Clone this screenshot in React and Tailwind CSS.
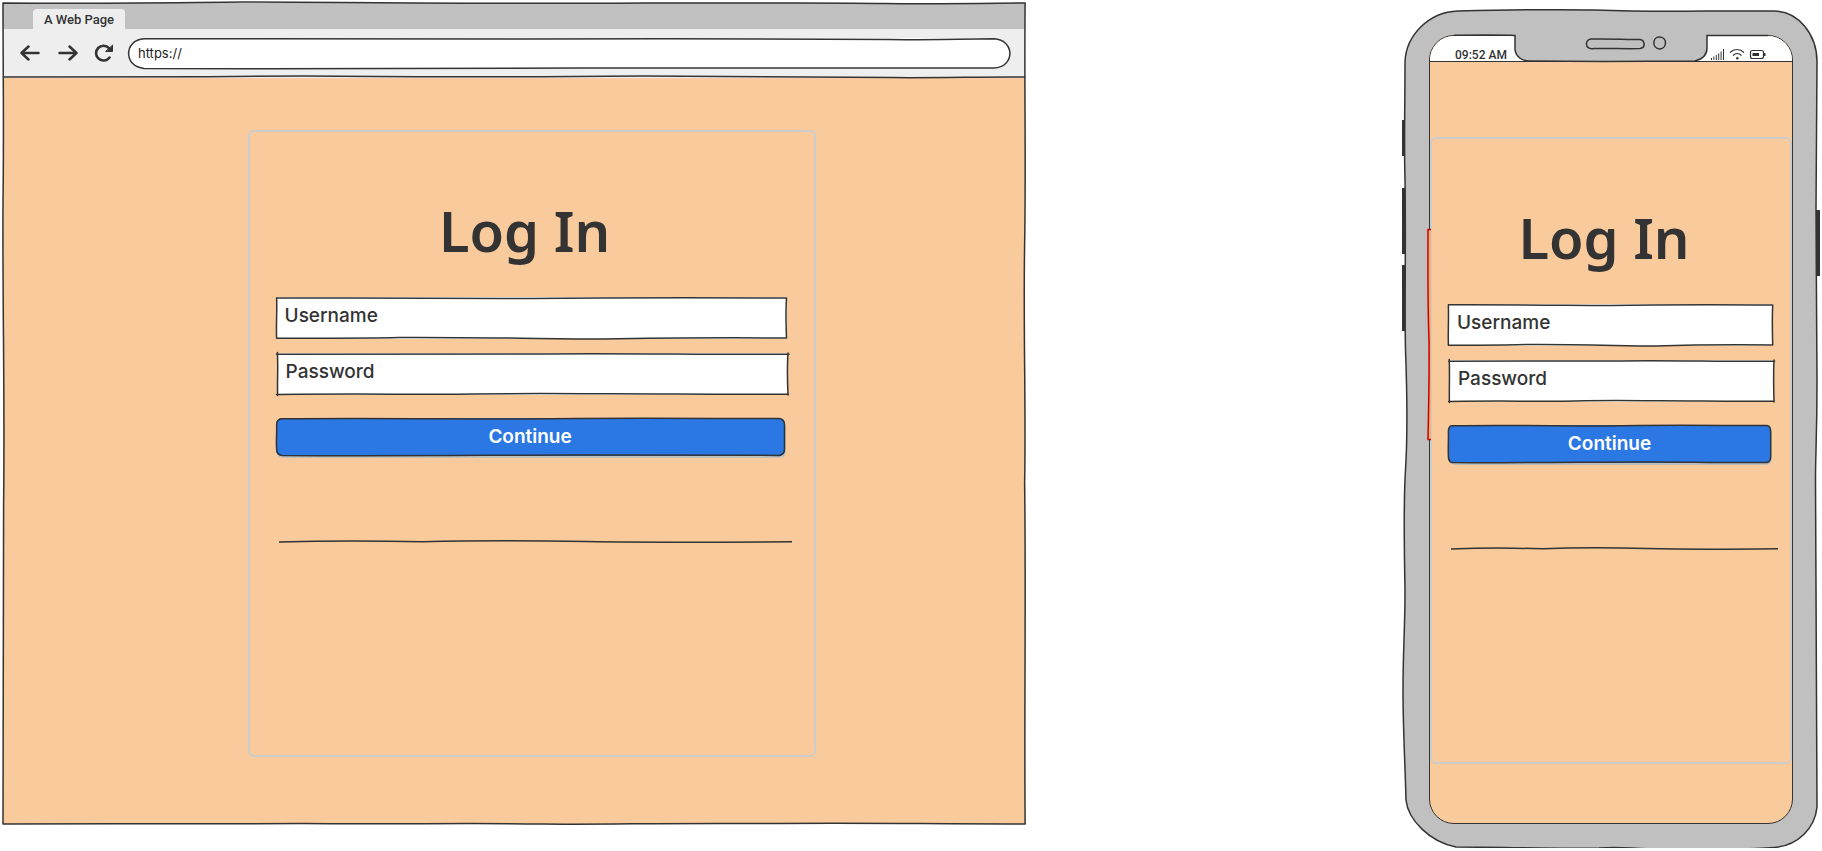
const ink = "#333333";

// Pen-drawn line that drifts a little around its axis.
function Rule() {
  return (
    <div role="separator" className="h-1">
      <svg viewBox="0 0 500 4" preserveAspectRatio="none" className="block h-full w-full overflow-visible" fill="none" stroke={ink} strokeWidth="1.5">
        <path vectorEffect="non-scaling-stroke" d="M0 2 C60 0.5 100 1 140 1.8 C200 0.2 250 0.6 300 1.6 C360 2.6 420 2.4 500 1.8" />
      </svg>
    </div>
  );
}

// Pen-drawn outline laid over the box that contains it.
function Sketch({ width, height, d }) {
  return (
    <svg
      aria-hidden="true"
      viewBox={"0 0 " + width + " " + height}
      preserveAspectRatio="none"
      className="pointer-events-none absolute inset-0 h-full w-full overflow-visible"
      fill="none"
      stroke={ink}
      strokeWidth="1.5"
      strokeLinejoin="round"
      strokeLinecap="round"
    >
      <path vectorEffect="non-scaling-stroke" d={d} />
    </svg>
  );
}

function Field({ label, type, className, outline }) {
  return (
    <div className={"relative h-[42px] " + className}>
      <input
        aria-label={label}
        type={type}
        placeholder={label}
        className="block h-full w-full bg-white px-[9px] pb-1.5 text-[19px] font-medium text-[#333] outline-none placeholder:text-[#333] placeholder:opacity-100"
      />
      <Sketch width={500} height={42} d={outline} />
    </div>
  );
}

function LoginForm({ className }) {
  return (
    <form
      onSubmit={(e) => e.preventDefault()}
      className={"flex h-[627px] flex-col rounded-md border-2 border-[#cccccc] pt-[58px] " + className}
    >
      <h2 className="pr-3.5 text-center font-['Noto_Sans',sans-serif] text-[56px] leading-[80px] font-semibold text-[#333]">Log In</h2>
      <Field
        label="Username"
        type="text"
        className="mt-[27px] mr-px"
        outline="M0.6 0.8 C120 0.6 180 1.4 250 1.6 C340 0.4 420 0.8 499.5 1 C498.6 14 499 28 499.5 41 C420 40.6 380 40.8 320 42 C260 41.6 180 40.2 120 40.6 C80 41.6 40 41.2 0.6 41.2 C0 28 1.2 14 0.6 0.8"
      />
      <Field
        label="Password"
        type="password"
        className="mt-3.5 ml-px"
        outline="M-0.5 1.2 C100 1.6 180 0.8 250 1 C330 -0.2 420 1.8 501 1.2 M500 0 C499 14 499.4 28 500 42 M500.5 41 C430 41.8 370 40.4 300 40.8 C220 40 180 41.6 120 41.2 C80 40.6 40 41 -0.5 41.4 M0.6 42.4 C0.2 28 1.2 14 0.4 -0.6"
      />
      <button type="submit" className="relative mt-[23px] mr-[3px] h-[38px] rounded-md bg-[#2b78e4] text-[19px] font-semibold text-white shadow-[1px_2px_0_#bfbfbf]">
        Continue
        <Sketch
          width={510}
          height={38}
          d="M6 0.8 C100 -0.2 180 1.2 250 1 C340 -0.4 430 0.6 504 0.6 C508 1 509.5 3 509.5 7 V31 C509.5 35 508 37 504 37.4 C420 37.8 360 36.6 300 37 C220 37 120 38.2 6 37.4 C2 37 0.6 35 0.6 31 C0 22 1 14 0.6 7 C0.6 3 2 1 6 0.8"
        />
      </button>
      <div className="mt-[84px] -mr-1 ml-[3px]">
        <Rule />
      </div>
    </form>
  );
}

function Browser() {
  return (
    <section aria-label="Browser" className="relative mt-[3px] ml-[3px] flex h-[821px] w-[56.1%] flex-col bg-[#f9cb9c]">
      <div className="flex h-[26px] items-end bg-[#c1c1c1] pl-[30px]">
        <div className="flex h-5 w-[92px] items-center justify-center rounded-t bg-[#eeeeee] pt-0.5 font-['Roboto',sans-serif] text-[13px] font-medium text-[#333]">A Web Page</div>
      </div>
      <div className="flex h-[49px] items-center bg-[#eeeeee] pr-[15px] pb-px pl-[17px]">
        <button aria-label="Back" className="mr-[18px]">
          <svg className="block h-4 w-5" viewBox="0 0 20 16" fill="none" stroke={ink} strokeWidth="2.5" strokeLinecap="round" strokeLinejoin="round"><path d="M18.500 8H1.500M8.500 1.500L1.500 8L8.500 14.500" /></svg>
        </button>
        <button aria-label="Forward" className="mr-4">
          <svg className="block h-4 w-5" viewBox="0 0 20 16" fill="none" stroke={ink} strokeWidth="2.5" strokeLinecap="round" strokeLinejoin="round"><path d="M1.500 8H18.500M11.500 1.500L18.500 8L11.500 14.500" /></svg>
        </button>
        <button aria-label="Reload" className="mr-3.5">
          <svg className="block h-[18px] w-5" viewBox="0 0 20 18" fill="none" stroke={ink} strokeWidth="2.6" strokeLinecap="round"><path d="M15.500 13.500A7.400 7.400 0 1 1 15 4.200" /><path d="M18.500 1.500V7.500H12Z" fill={ink} strokeWidth="1" strokeLinejoin="round" /></svg>
        </button>
        <div className="relative h-[31px] min-w-0 flex-1">
          <input aria-label="Address" type="text" defaultValue="https://" className="block h-full w-full rounded-full bg-white px-2.5 text-[13px] text-[#222] outline-none" />
          <Sketch
            width={881}
            height={31}
            d="M16 0.8 C120 0.4 260 1.400 400 1 C520 0.400 640 0.600 760 1.600 C800 2 830 1 865 0.800 C886 2 886 29 865 30 C740 30.600 600 31 450 30 C300 30.600 160 31 16 30.400 C-4.500 29 -4.500 2 16 0.800"
          />
        </div>
      </div>
      <div className="flex justify-center pt-[52px] pl-[35px]">
        <LoginForm className="w-[568px] px-[26px]" />
      </div>
      <Sketch
        width={1022}
        height={821}
        d="M0 0 C100 0.6 180 -0.6 240 -1 C380 -0.6 520 1 640 0 C760 0.4 830 -0.8 880 0.6 C940 1.2 980 0.4 1022 0 C1021 80 1023 160 1021.5 240 C1020 330 1023 400 1021.5 480 C1023 600 1021 700 1022 821 C920 821 860 819.6 760 820.6 C660 819.8 600 821.8 540 821 C460 819.8 400 821.4 300 820.6 C200 821 100 820.4 0 821 C1 700 -0.4 600 0.6 500 C2 400 -0.6 300 0 200 C1 130 0 60 0 0 M0 74 C120 74 200 74 300 73 C420 74.4 520 74 640 73 C740 73 820 74 890 74.6 C940 75 980 73.6 1022 74"
      />
    </section>
  );
}

function Phone() {
  return (
    <section aria-label="Phone" className="relative mt-2.5 mr-1 w-[414px] px-[25px] pt-[25px] pb-6">
      <svg className="absolute inset-0 h-full w-full overflow-visible" viewBox="0 0 414 838" aria-hidden="true">
        <g fill={ink}>
          <rect x="-2" y="110" width="5" height="36" />
          <rect x="-2" y="178" width="5" height="66" />
          <rect x="-2" y="255" width="5" height="66" />
          <rect x="411" y="200" width="5" height="66" />
        </g>
        <path
          fill="#c0c0c0"
          stroke={ink}
          strokeWidth="1.5"
          d="M54 1 C100 0 150 -1 190 0 C220 1 260 1.5 300 1 L370 1 C394 1 413 24 413 52 C413 100 412 150 412 200 C412 260 413 300 413 370 C413 430 411.5 440 411.5 470 C412 540 413 640 413 797 C411 818 394 836 370 837.5 C330 840 280 840 250 839 C220 838 215 836.5 195 838 C150 839 100 837 52 837 C26 832 4 810 2 790 C1 750 -1 720 -1 680 C-1 640 1 620 1 580 C0 530 -0.5 490 1.5 460 C4 420 3 380 1.5 340 C0.5 300 2 230 1 170 C0 140 1 90 1 52 C2 25 25 2 54 1 Z"
        />
      </svg>
      <div className="relative flex h-[789px] flex-col overflow-hidden rounded-[25px] border border-[#333] bg-[#f9cb9c]">
        <div className="flex h-[26px] shrink-0 items-end border-b border-[#333] bg-white">
          <time className="pl-[25px] font-['Roboto',sans-serif] text-[12px] leading-3 font-medium whitespace-nowrap text-[#333]">09:52 AM</time>
        </div>
        <LoginForm className="mt-[75px] w-full px-4" />
      </div>
      <svg className="pointer-events-none absolute inset-0 h-full w-full overflow-visible" viewBox="0 0 414 838" fill="none" stroke={ink} strokeWidth="1.5" aria-hidden="true">
        <path stroke="none" fill="#c0c0c0" d="M111 24 V40 C112 46 117 51 125 51 H291 C299 49 303 45 303 38 V24 Z" />
        <path d="M50 25.300 C80 25 95 24.800 111 25.500 V40 C112 46 117 51 125 51 L200 51.5 L291 51 C299 49 303 45 303 38 V25.500 L364 25.500" />
        <path d="M187 29 C205 28.5 220 29.5 236 29.5 C242 31 241 38 236 38.5 C220 39 205 38 190 38.5 C181 40 180 30 187 29 Z" />
        <path d="M255 27 C264 27 263 38 256 39 C247 38 249 27 255 27 Z" />
        <path strokeWidth="1" d="M307.5 50V48M309.9 50V46.5M312.3 50V45M314.7 50V43.5M317.1 50V41.5M319.5 50V39" />
        <path strokeWidth="1.2" d="M326 42.5C330 38.5 336 38.5 340 42.5M329 45.5C331.5 43 335 43 337.5 45.5" />
        <circle cx="333.3" cy="48.3" r="1.2" fill={ink} stroke="none" />
        <rect x="346.5" y="40.5" width="13" height="8" rx="2" strokeWidth="1.2" />
        <path stroke="none" fill={ink} d="M348.5 43H355V46H348.5ZM360 43H361.5V46H360Z" />
        <rect x="24.5" y="219.5" width="2.5" height="210" fill="#f6b26b" stroke="none" />
        <path stroke="#cc0000" d="M27 219.5H24C24 260 23.5 290 25 330C25.5 370 24.5 400 24 429.5H27" />
      </svg>
    </section>
  );
}

export default function App() {
  return (
    <main className="flex items-start justify-between bg-white font-['Inter',sans-serif]">
      <Browser />
      <Phone />
    </main>
  );
}
